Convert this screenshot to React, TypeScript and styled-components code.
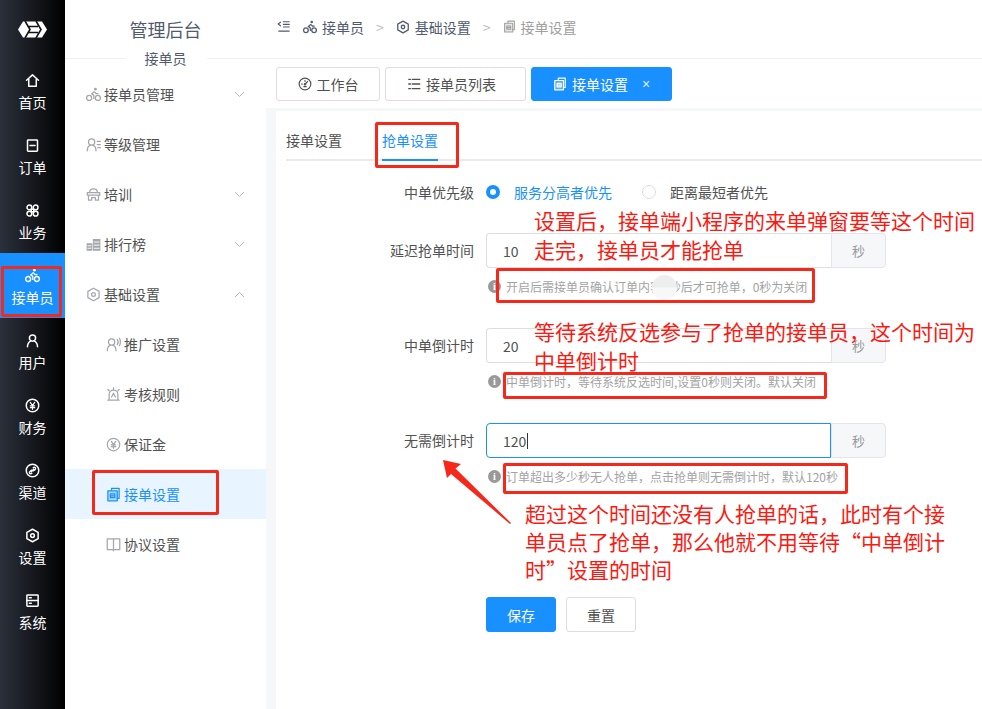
import React from "react"
import styled, { createGlobalStyle } from "styled-components"

const FONT = `"Noto Sans CJK SC", "Noto Sans", "Liberation Sans", sans-serif`

const GlobalStyle = createGlobalStyle`
  html, body {
    margin: 0;
    padding: 0;
    background: #fff;
    font-family: ${FONT};
  }
`

type IconName =
  | "home" | "order" | "business" | "rider" | "user" | "money" | "channel" | "hex" | "system"
  | "level" | "train" | "rank" | "promo" | "alarm" | "doc" | "book" | "collapse" | "gauge" | "list"

const paths: Record<IconName, React.ReactNode> = {
  home: <path d="M2.500 11.500 12 3l9.500 8.500M6 9.500V21h12V9.500" />,
  order: (
    <>
      <rect x="4" y="3" width="16" height="18" rx="1" />
      <path d="M8 12h8" />
    </>
  ),
  business: (
    <>
      <circle cx="7" cy="7" r="3.800" />
      <circle cx="17" cy="7" r="3.800" />
      <circle cx="7" cy="17" r="3.800" />
      <circle cx="17" cy="17" r="3.800" />
      <path d="M10 10h4v4h-4z" />
    </>
  ),
  rider: (
    <>
      <circle cx="5" cy="17.500" r="4" />
      <circle cx="19" cy="17.500" r="4" />
      <circle cx="15" cy="3.500" r="2.200" fill="currentColor" stroke="none" />
      <path fill="currentColor" stroke="none" d="M13 6.500 7.500 11l4 3v5h2v-6.200l-2.500-2 2.500-2 2 2.700h4.500v-2H17z" />
    </>
  ),
  user: (
    <>
      <circle cx="12" cy="8" r="5" />
      <path d="M4 22c0-5 3-8 5-9M20 22c0-5-3-8-5-9" />
    </>
  ),
  money: (
    <>
      <circle cx="12" cy="12" r="10" />
      <path strokeWidth="2" d="m8.500 7 3.500 5 3.500-5M12 12v6M8.500 12.500h7M8.500 15.500h7" />
    </>
  ),
  channel: (
    <>
      <circle cx="12" cy="12" r="10" />
      <path strokeWidth="2.200" d="M13 7.500c2-1.500 4-.5 4 1.500 0 1.500-2 2.500-3.500 3.500M11 16.500c-2 1.500-4 .5-4-1.500 0-1.500 2-2.500 3.500-3.500M10 14l4-4" />
    </>
  ),
  hex: (
    <>
      <path d="m12 2 9 5v10l-9 5-9-5V7z" />
      <circle cx="12" cy="12" r="3" />
    </>
  ),
  system: (
    <>
      <rect x="3" y="3" width="18" height="18" rx="1" />
      <path d="M3 12h18M7 7.500h3M7 16.500h3" />
    </>
  ),
  level: (
    <>
      <circle cx="9" cy="8" r="5" />
      <path d="M2 22c0-5 2.500-8 5-9M16 22c0-5-2.500-8-5-9M18 7h5M18 12h5M19 17h4" />
    </>
  ),
  train: <path d="M6 8c0-3 2-5 6-5s6 2 6 5M2 9h20v4H2zM4 13v8h5v-4h6v4h5v-8" />,
  rank: (
    <>
      <path fill="currentColor" d="M1 10h9v12H1zM11 3h12v19H11z" stroke="none" />
      <path stroke="#fff" strokeWidth="1.500" d="M3 14h5M3 18h5M13 8h8M13 13h8M13 18h8" />
    </>
  ),
  promo: (
    <>
      <circle cx="9" cy="8" r="5" />
      <path d="M2 22c0-5 2.500-8 5-9M16 22c0-5-2.500-8-5-9M18 4c1.500 2 1.500 6 0 8M21.500 2c2 3 2 9 0 12" />
    </>
  ),
  alarm: <path d="M5 21V12c0-4 3-7 7-7s7 3 7 7v9zM3 21h18M12 1v2M3 4l2 2M21 4l-2 2M9 16l3-6 3 6" />,
  doc: (
    <>
      <path d="M9 5V2h12v16h-3" />
      <path fill="currentColor" fillOpacity="0.25" d="M3 6h15v16H3z" />
      <path d="M7 11h7v6H7zM7 14h5" />
    </>
  ),
  book: <path d="M2 3h20v17H2zM12 3v19" />,
  collapse: <path d="M6 4 2 7l4 3M11 3h10M11 7.500h10M11 12h10M3 19h18" />,
  gauge: (
    <>
      <circle cx="12" cy="12" r="10" />
      <path d="M6 12h1.500M12 6v1.500M16.500 7.500 12.500 12M10 16.500h4" />
      <circle cx="12" cy="12.500" r="1.200" fill="currentColor" />
    </>
  ),
  list: <path d="M3 4h3M3 12h3M3 20h3M9 4h13M9 12h13M9 20h13" />,
}

const Icon = ({ name, size = 14, width = 2 }: { name: IconName; size?: number; width?: number }) => (
  <svg width={size} height={size} viewBox="0 0 24 24" fill="none" stroke="currentColor" strokeWidth={width} strokeLinecap="round" strokeLinejoin="round">
    {paths[name]}
  </svg>
)

const Logo = () => (
  <svg width="29" height="17" viewBox="0 0 29 17">
    <path fill="#fff" d="M0 8.500 5 .5h19l5 8-5 8H5z" />
    <path fill="none" stroke="#111318" strokeWidth="1.600" d="M7 0l5 8.500L7 17M18 0l5 8.500L18 17M10 5.500h10M10 11.500h10" />
  </svg>
)

const railItems: { name: IconName; label: string; active?: boolean }[] = [
  { name: "home", label: "首页" },
  { name: "order", label: "订单" },
  { name: "business", label: "业务" },
  { name: "rider", label: "接单员", active: true },
  { name: "user", label: "用户" },
  { name: "money", label: "财务" },
  { name: "channel", label: "渠道" },
  { name: "hex", label: "设置" },
  { name: "system", label: "系统" },
]

const menuItems: { name: IconName; label: string; arrow?: "up" | "down"; child?: boolean; active?: boolean }[] = [
  { name: "rider", label: "接单员管理", arrow: "down" },
  { name: "level", label: "等级管理" },
  { name: "train", label: "培训", arrow: "down" },
  { name: "rank", label: "排行榜", arrow: "down" },
  { name: "hex", label: "基础设置", arrow: "up" },
  { name: "promo", label: "推广设置", child: true },
  { name: "alarm", label: "考核规则", child: true },
  { name: "money", label: "保证金", child: true },
  { name: "doc", label: "接单设置", child: true, active: true },
  { name: "book", label: "协议设置", child: true },
]

const Caret = ({ up }: { up?: boolean }) => (
  <svg width="11" height="7" viewBox="0 0 11 7" fill="none" stroke="#b5b8bf" strokeWidth="1">
    <path d={up ? "M1 6l4.500-4.500L10 6" : "M1 1l4.500 4.500L10 1"} />
  </svg>
)

const NumberField = ({ value, focused }: { value: string; focused?: boolean }) => (
  <S.Field>
    <S.FieldInput $focused={focused}>
      {value}
      {focused && <S.TextCaret />}
    </S.FieldInput>
    <S.FieldAppend>秒</S.FieldAppend>
  </S.Field>
)

const Hint = ({ children }: { children: React.ReactNode }) => (
  <S.Hint>
    <S.InfoDot>i</S.InfoDot>
    {children}
  </S.Hint>
)

export default function App() {
  return (
    <S.Page>
      <GlobalStyle />
      <S.Rail>
        <S.LogoBox>
          <Logo />
        </S.LogoBox>
        {railItems.map((item) => (
          <S.RailItem key={item.label} $active={item.active}>
            <Icon name={item.name} size={15} width={2.4} />
            <span>{item.label}</span>
          </S.RailItem>
        ))}
      </S.Rail>

      <S.SubMenu>
        <S.SubTitle>管理后台</S.SubTitle>
        <S.SubDivider>
          <span>接单员</span>
        </S.SubDivider>
        <S.MenuList>
          {menuItems.map((item) => (
            <S.MenuItem key={item.label} $child={item.child} $active={item.active}>
              <S.MenuIcon $active={item.active}>
                <Icon name={item.name} size={15} width={2} />
              </S.MenuIcon>
              <S.MenuLabel>{item.label}</S.MenuLabel>
              {item.arrow && <Caret up={item.arrow === "up"} />}
            </S.MenuItem>
          ))}
        </S.MenuList>
      </S.SubMenu>

      <S.Main>
        <S.Header>
          <S.Collapse>
            <Icon name="collapse" size={14} width={2} />
          </S.Collapse>
          <S.Crumb>
            <Icon name="rider" size={14} width={2.2} />
            接单员
          </S.Crumb>
          <S.CrumbSep>&gt;</S.CrumbSep>
          <S.Crumb>
            <Icon name="hex" size={14} width={2.2} />
            基础设置
          </S.Crumb>
          <S.CrumbSep>&gt;</S.CrumbSep>
          <S.Crumb $muted>
            <Icon name="doc" size={13} width={2} />
            接单设置
          </S.Crumb>
        </S.Header>

        <S.TagBar>
          <S.Tag $width={104}>
            <Icon name="gauge" size={14} width={2} />
            工作台
          </S.Tag>
          <S.Tag $width={141} $shift={8}>
            <Icon name="list" size={14} width={2.2} />
            接单员列表
          </S.Tag>
          <S.Tag $width={141} $active>
            <Icon name="doc" size={14} width={2} />
            接单设置
            <S.TagClose>×</S.TagClose>
          </S.Tag>
        </S.TagBar>

        <S.Body>
          <S.Card>
            <S.Tabs>
              <S.TabItem>接单设置</S.TabItem>
              <S.TabItem $active>抢单设置</S.TabItem>
            </S.Tabs>

            <S.Form>
              <S.RadioRow>
                <S.Label>中单优先级</S.Label>
                <S.RadioGroup>
                  <S.Radio $checked>服务分高者优先</S.Radio>
                  <S.Radio>距离最短者优先</S.Radio>
                </S.RadioGroup>
              </S.RadioRow>

              <S.FieldRow $gap={22}>
                <S.Label>延迟抢单时间</S.Label>
                <NumberField value="10" />
              </S.FieldRow>
              <Hint>开启后需接单员确认订单内容0秒后才可抢单，0秒为关闭</Hint>

              <S.FieldRow $gap={32}>
                <S.Label>中单倒计时</S.Label>
                <NumberField value="20" />
              </S.FieldRow>
              <Hint>中单倒计时，等待系统反选时间,设置0秒则关闭。默认关闭</Hint>

              <S.FieldRow $gap={32}>
                <S.Label>无需倒计时</S.Label>
                <NumberField value="120" focused />
              </S.FieldRow>
              <Hint>订单超出多少秒无人抢单，点击抢单则无需倒计时，默认120秒</Hint>

              <S.Actions>
                <S.PrimaryButton>保存</S.PrimaryButton>
                <S.PlainButton>重置</S.PlainButton>
              </S.Actions>
            </S.Form>
          </S.Card>
        </S.Body>
      </S.Main>

      <S.Blob />
      <S.RedBox $x={1} $y={266} $w={61} $h={51} />
      <S.RedBox $x={92} $y={470} $w={127} $h={45} />
      <S.RedBox $x={375} $y={122} $w={84} $h={46} />
      <S.RedBox $x={496} $y={268} $w={319} $h={35} />
      <S.RedBox $x={503} $y={372} $w={324} $h={27} />
      <S.RedBox $x={503} $y={463} $w={345} $h={31} />

      <S.Note $x={534} $y={206} $w={448}>设置后，接单端小程序的来单弹窗要等这个时间走完，接单员才能抢单</S.Note>
      <S.Note $x={534} $y={317} $w={448}>等待系统反选参与了抢单的接单员，这个时间为中单倒计时</S.Note>
      <S.Note $x={525} $y={499} $w={425} $tight>超过这个时间还没有人抢单的话，此时有个接单员点了抢单，那么他就不用等待“中单倒计时”设置的时间</S.Note>

      <S.Arrow width="70" height="66" viewBox="0 0 70 66">
        <polygon fill="#f5281c" points="0,0 18,4 12.500,8.500 68,63 67,64 8,14 4,18" />
      </S.Arrow>
    </S.Page>
  )
}

const S = {
  Page: styled.div`
    position: relative;
    display: flex;
    width: 982px;
    height: 709px;
    overflow: hidden;
    background: #fff;
    color: #515a6e;
    font-size: 14px;
  `,
  Rail: styled.nav`
    flex: 0 0 65px;
    background: linear-gradient(90deg, #2b303b 0%, #14161b 55%, #000 100%);
    color: #fff;
  `,
  LogoBox: styled.div`
    height: 58px;
    display: flex;
    align-items: center;
    justify-content: center;
  `,
  RailItem: styled.div<{ $active?: boolean }>`
    height: 65px;
    padding-top: 15px;
    box-sizing: border-box;
    display: flex;
    flex-direction: column;
    align-items: center;
    gap: 4px;
    line-height: 20px;
    background: ${({ $active }) => ($active ? "#1890ff" : "transparent")};
  `,
  SubMenu: styled.aside`
    flex: 0 0 201px;
    background: #fff;
  `,
  SubTitle: styled.div`
    height: 58px;
    line-height: 58px;
    text-align: center;
    font-size: 18px;
    color: #515a6e;
  `,
  SubDivider: styled.div`
    height: 1px;
    background: #f0f1f4;
    display: flex;
    align-items: center;
    justify-content: center;
    span {
      width: 82px;
      padding-bottom: 2px;
      background: #fff;
      text-align: center;
      font-size: 14px;
      line-height: 18px;
    }
  `,
  MenuList: styled.div`
    padding-top: 10px;
  `,
  MenuItem: styled.div<{ $child?: boolean; $active?: boolean }>`
    height: 50px;
    display: flex;
    align-items: center;
    padding: 0 21px 0 ${({ $child }) => ($child ? "41px" : "21px")};
    background: ${({ $active }) => ($active ? "#e8f4ff" : "transparent")};
    color: ${({ $active }) => ($active ? "#1890ff" : "#515151")};
  `,
  MenuIcon: styled.span<{ $active?: boolean }>`
    display: flex;
    width: 18px;
    color: ${({ $active }) => ($active ? "#1890ff" : "#a4a6ab")};
  `,
  MenuLabel: styled.span`
    flex: 1;
  `,
  Main: styled.div`
    flex: 1;
    min-width: 0;
    display: flex;
    flex-direction: column;
  `,
  Header: styled.header`
    height: 59px;
    flex: none;
    box-sizing: border-box;
    border-bottom: 1px solid #f0f1f4;
    display: flex;
    align-items: center;
    padding-left: 11px;
    padding-bottom: 5px;
  `,
  Collapse: styled.span`
    display: flex;
    margin-right: 12px;
    color: #515a6e;
  `,
  Crumb: styled.span<{ $muted?: boolean }>`
    display: flex;
    align-items: center;
    gap: 5px;
    color: ${({ $muted }) => ($muted ? "#a0a0a0" : "#515a6e")};
  `,
  CrumbSep: styled.span`
    margin: 0 12px;
    color: #b8bcc4;
  `,
  TagBar: styled.div`
    height: 49px;
    flex: none;
    box-sizing: border-box;
    display: flex;
    gap: 5px;
    padding: 8px 0 7px 10px;
  `,
  Tag: styled.div<{ $width: number; $active?: boolean; $shift?: number }>`
    width: ${({ $width }) => $width}px;
    box-sizing: border-box;
    display: flex;
    align-items: center;
    justify-content: center;
    gap: 5px;
    padding-right: ${({ $shift }) => $shift ?? 0}px;
    border: 1px solid ${({ $active }) => ($active ? "#1890ff" : "#dcdee2")};
    border-radius: 3px;
    background: ${({ $active }) => ($active ? "#1890ff" : "#fff")};
    color: ${({ $active }) => ($active ? "#fff" : "#515151")};
  `,
  TagClose: styled.span`
    margin-left: 9px;
    font: 14px "Liberation Sans", sans-serif;
    opacity: 0.85;
  `,
  Body: styled.div`
    flex: 1;
    min-height: 0;
    background: #f5f7f9;
    padding: 3px 0 0 10px;
    display: flex;
  `,
  Card: styled.div`
    flex: 1;
    background: #fff;
    padding-left: 10px;
  `,
  Tabs: styled.div`
    height: 50px;
    box-sizing: border-box;
    display: flex;
    gap: 40px;
    border-bottom: 2px solid #e8eaec;
  `,
  TabItem: styled.div<{ $active?: boolean }>`
    height: 50px;
    box-sizing: border-box;
    line-height: 58px;
    color: ${({ $active }) => ($active ? "#1890ff" : "#515151")};
    border-bottom: 2px solid ${({ $active }) => ($active ? "#1890ff" : "transparent")};
  `,
  Form: styled.div`
    padding-top: 15px;
    margin-left: -10px;
  `,
  RadioRow: styled.div`
    height: 35px;
    box-sizing: border-box;
    padding-bottom: 3px;
    display: flex;
    align-items: center;
    gap: 12px;
  `,
  FieldRow: styled.div<{ $gap: number }>`
    height: 35px;
    display: flex;
    align-items: center;
    gap: 12px;
    margin-top: ${({ $gap }) => $gap}px;
  `,
  Label: styled.label`
    width: 198px;
    text-align: right;
    color: #515151;
    padding-bottom: 1px;
  `,
  RadioGroup: styled.div`
    display: flex;
    gap: 30px;
  `,
  Radio: styled.span<{ $checked?: boolean }>`
    display: flex;
    align-items: center;
    gap: 14px;
    color: ${({ $checked }) => ($checked ? "#1890ff" : "#515151")};
    &::before {
      content: "";
      width: 14px;
      height: 14px;
      box-sizing: border-box;
      border-radius: 50%;
      border: ${({ $checked }) => ($checked ? "4.5px solid #1890ff" : "1px solid #dcdee2")};
      background: #fff;
    }
  `,
  Field: styled.div`
    display: flex;
    width: 400px;
    height: 35px;
  `,
  FieldInput: styled.div<{ $focused?: boolean }>`
    flex: 1;
    box-sizing: border-box;
    display: flex;
    align-items: center;
    padding-left: 16px;
    border: 1px solid ${({ $focused }) => ($focused ? "#1890ff" : "#dcdee2")};
    border-right-width: ${({ $focused }) => ($focused ? "1px" : "0")};
    border-radius: 4px 0 0 4px;
    color: #515151;
  `,
  TextCaret: styled.i`
    width: 1px;
    height: 16px;
    margin-left: 1px;
    background: #333;
  `,
  FieldAppend: styled.div`
    flex: 0 0 55px;
    box-sizing: border-box;
    display: flex;
    align-items: center;
    justify-content: center;
    background: #f5f7f9;
    border: 1px solid #e3e5ea;
    border-radius: 0 4px 4px 0;
    color: #999;
    font-size: 13px;
  `,
  Hint: styled.div`
    display: flex;
    align-items: center;
    gap: 5px;
    height: 20px;
    margin: 8px 0 0 212px;
    font-size: 12px;
    color: #a3a3a3;
  `,
  InfoDot: styled.i`
    width: 13px;
    height: 13px;
    border-radius: 50%;
    background: #999;
    color: #fff;
    font: bold 10px/13px "Liberation Serif", serif;
    text-align: center;
    flex: none;
  `,
  Actions: styled.div`
    display: flex;
    gap: 10px;
    margin: 111px 0 0 210px;
  `,
  PrimaryButton: styled.button`
    width: 70px;
    height: 35px;
    border: 1px solid #1890ff;
    border-radius: 3px;
    background: #1890ff;
    color: #fff;
    font: 14px ${FONT};
  `,
  PlainButton: styled.button`
    width: 70px;
    height: 35px;
    border: 1px solid #dcdee2;
    border-radius: 3px;
    background: #fff;
    color: #515151;
    font: 14px ${FONT};
  `,
  Blob: styled.div`
    position: absolute;
    left: 652px;
    top: 275px;
    width: 25px;
    height: 25px;
    border-radius: 50%;
    background: linear-gradient(180deg, #eeeeee 0%, #eeeeee 48%, #f8f8f8 52%, #f8f8f8 100%);
  `,
  RedBox: styled.div<{ $x: number; $y: number; $w: number; $h: number }>`
    position: absolute;
    left: ${({ $x }) => $x}px;
    top: ${({ $y }) => $y}px;
    width: ${({ $w }) => $w}px;
    height: ${({ $h }) => $h}px;
    box-sizing: border-box;
    border: 3px solid #f5281c;
    border-radius: 2px;
  `,
  Note: styled.div<{ $x: number; $y: number; $w: number; $tight?: boolean }>`
    position: absolute;
    left: ${({ $x }) => $x}px;
    top: ${({ $y }) => $y}px;
    width: ${({ $w }) => $w}px;
    font-size: 21px;
    line-height: ${({ $tight }) => ($tight ? "28px" : "29px")};
    color: #fb1a12;
  `,
  Arrow: styled.svg`
    position: absolute;
    left: 443px;
    top: 460px;
  `,
}
